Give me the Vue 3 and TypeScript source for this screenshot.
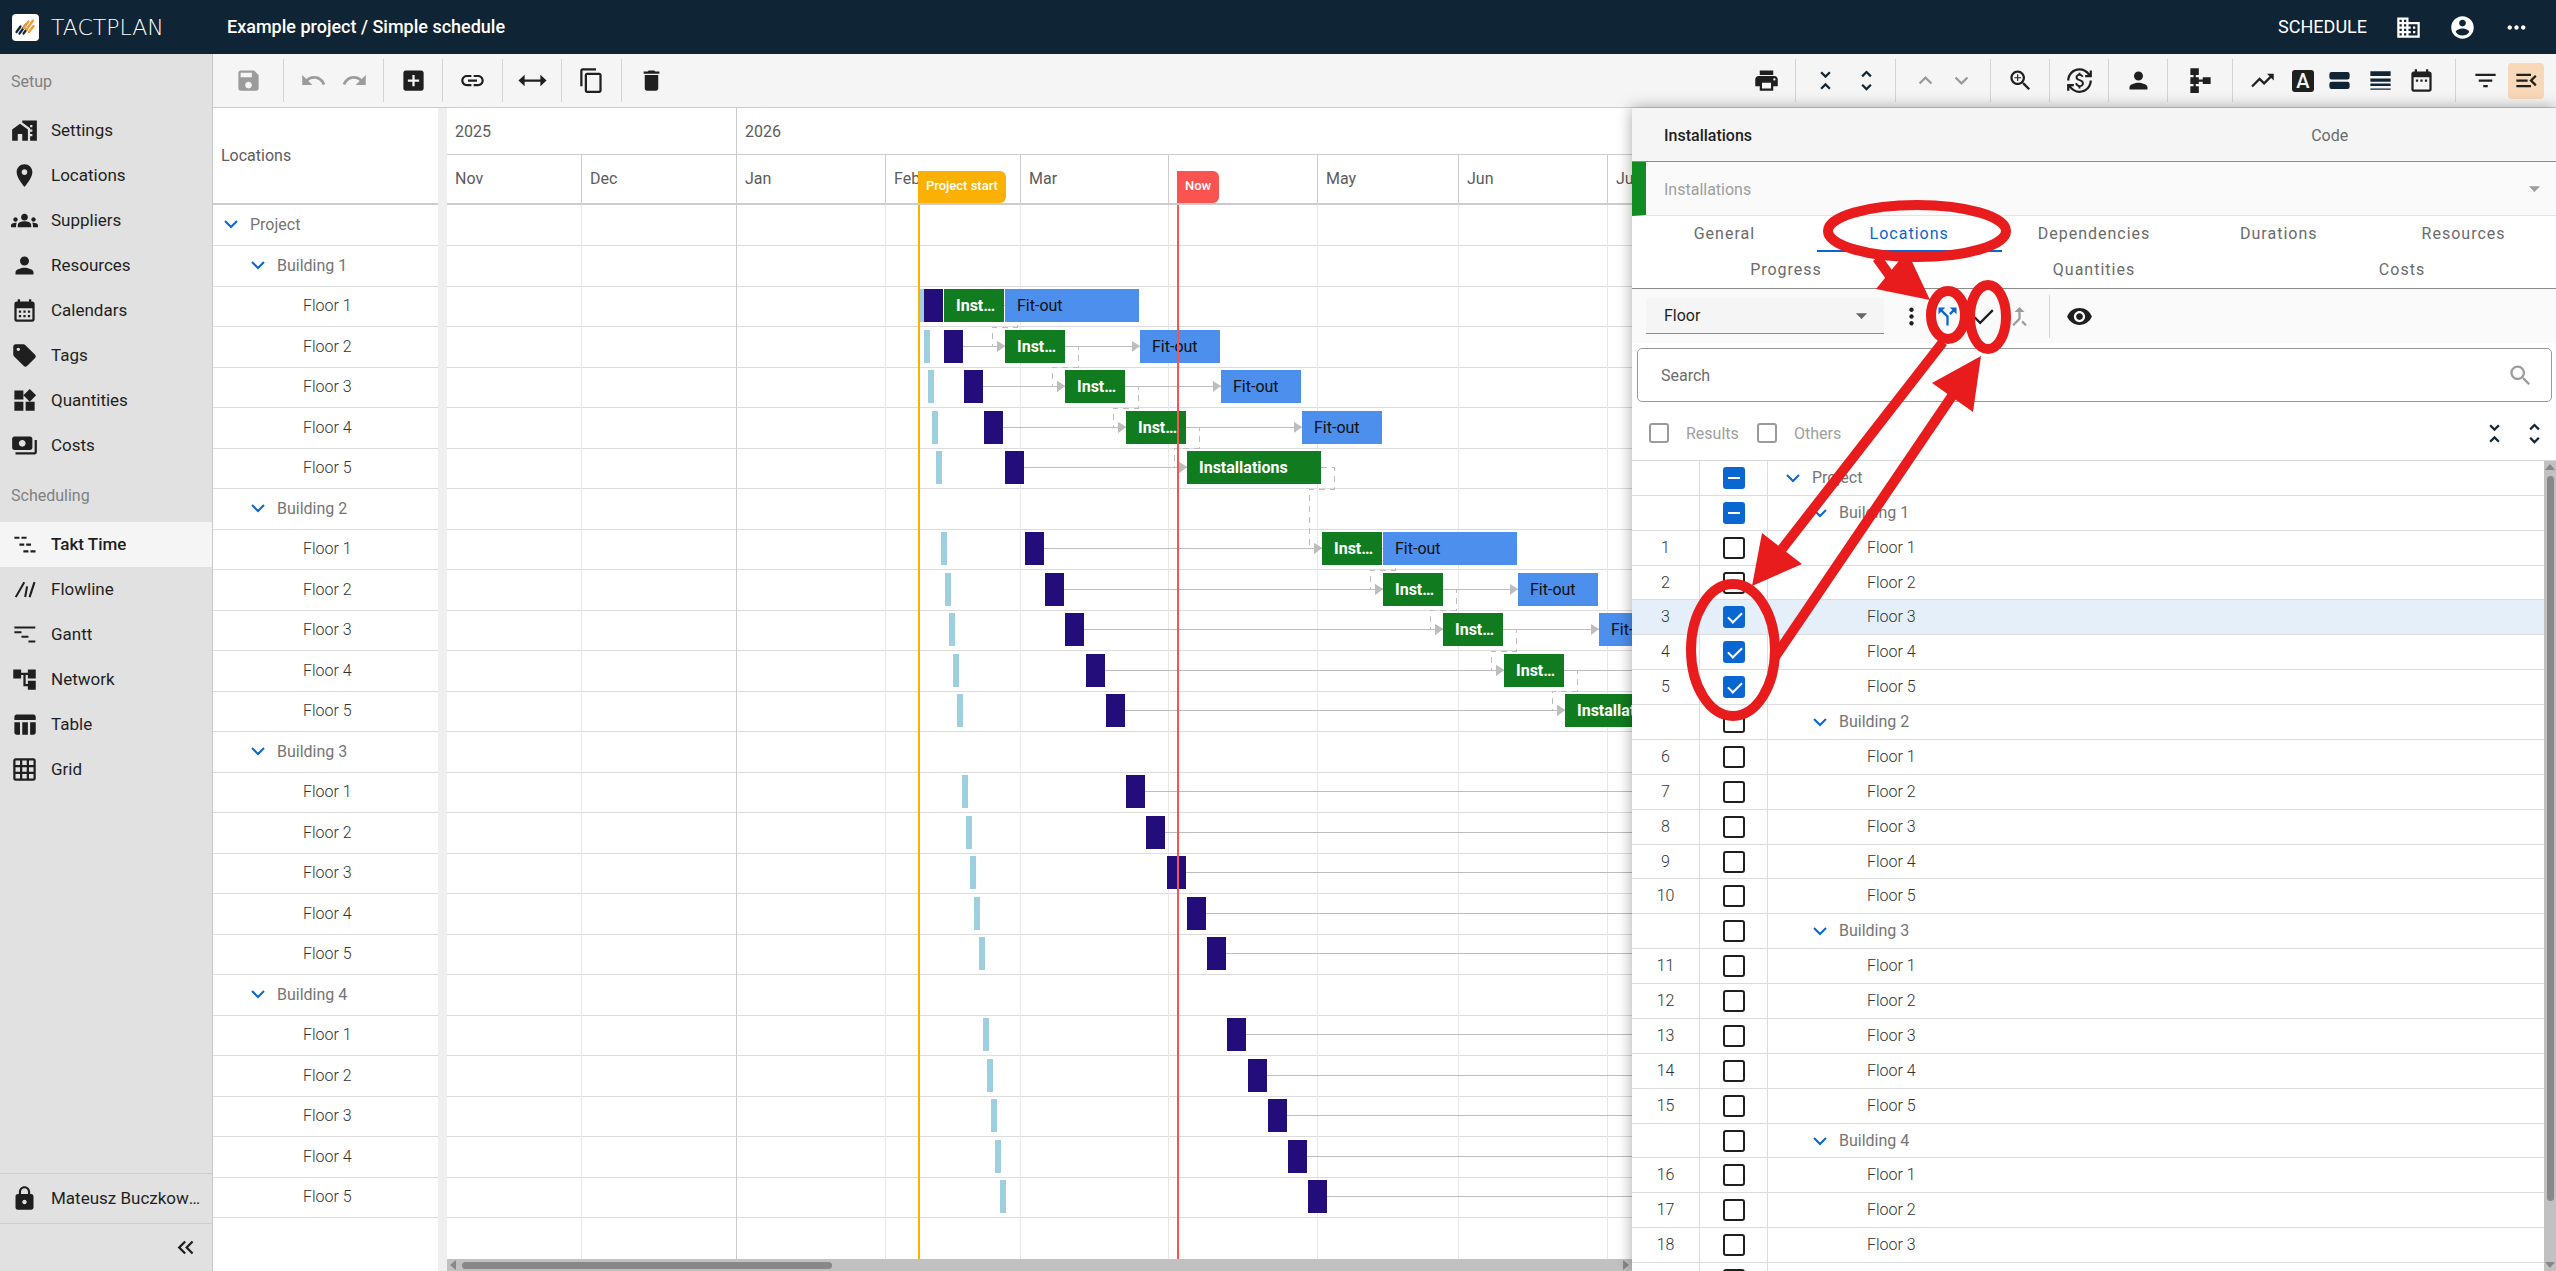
<script setup lang="ts">
import { h, ref, type FunctionalComponent } from 'vue'

const icons: Record<string, string> = {
  save: 'M17 3H5c-1.11 0-2 .9-2 2v14c0 1.1.89 2 2 2h14c1.1 0 2-.9 2-2V7l-4-4zm-5 16c-1.66 0-3-1.34-3-3s1.34-3 3-3 3 1.34 3 3-1.34 3-3 3zm3-10H5V5h10v4z',
  undo: 'M12.5 8c-2.65 0-5.05.99-6.9 2.6L2 7v9h9l-3.62-3.62c1.39-1.16 3.16-1.88 5.12-1.88 3.54 0 6.55 2.31 7.6 5.5l2.37-.78C21.08 11.03 17.15 8 12.5 8z',
  redo: 'M18.4 10.6C16.55 8.99 14.15 8 11.5 8c-4.65 0-8.58 3.03-9.96 7.22L3.9 16c1.05-3.19 4.05-5.5 7.6-5.5 1.95 0 3.73.72 5.12 1.88L13 16h9V7l-3.6 3.6z',
  add: 'M19 3H5c-1.11 0-2 .9-2 2v14c0 1.1.89 2 2 2h14c1.1 0 2-.9 2-2V5c0-1.1-.9-2-2-2zm-2 10h-4v4h-2v-4H7v-2h4V7h2v4h4v2z',
  link: 'M3.9 12c0-1.71 1.39-3.1 3.1-3.1h4V7H7c-2.76 0-5 2.24-5 5s2.24 5 5 5h4v-1.9H7c-1.71 0-3.1-1.39-3.1-3.1zM8 13h8v-2H8v2zm9-6h-4v1.9h4c1.71 0 3.1 1.39 3.1 3.1s-1.39 3.1-3.1 3.1h-4V17h4c2.76 0 5-2.24 5-5s-2.24-5-5-5z',
  stretch: 'M-.5 12 5 6.8v4.2h14V6.800l5.500 5.200-5.500 5.200V13H5v4.200z',
  copy: 'M16 1H4c-1.1 0-2 .9-2 2v14h2V3h12V1zm3 4H8c-1.1 0-2 .9-2 2v14c0 1.1.9 2 2 2h11c1.1 0 2-.9 2-2V7c0-1.1-.9-2-2-2zm0 16H8V7h11v14z',
  trash: 'M6 19c0 1.1.9 2 2 2h8c1.1 0 2-.9 2-2V7H6v12zM19 4h-3.5l-1-1h-5l-1 1H5v2h14V4z',
  print: 'M19 8H5c-1.66 0-3 1.34-3 3v6h4v4h12v-4h4v-6c0-1.66-1.34-3-3-3zm-3 11H8v-5h8v5zm3-7c-.55 0-1-.45-1-1s.45-1 1-1 1 .45 1 1-.45 1-1 1zm-1-9H6v4h12V3z',
  collapse: 'M7.41 18.59L8.83 20 12 16.83 15.17 20l1.41-1.41L12 14l-4.59 4.59zm9.18-13.18L15.17 4 12 7.17 8.83 4 7.41 5.41 12 10l4.59-4.59z',
  expand: 'M12 5.83L15.17 9l1.41-1.41L12 3 7.41 7.59 8.83 9 12 5.83zm0 12.34L8.83 15l-1.41 1.41L12 21l4.59-4.59L15.17 15 12 18.17z',
  up: 'M12 8l-6 6 1.41 1.41L12 10.83l4.59 4.58L18 14z',
  down: 'M16.59 8.59L12 13.17 7.41 8.59 6 10l6 6 6-6z',
  zoom: 'M15.5 14h-.79l-.28-.27C15.41 12.59 16 11.11 16 9.5 16 5.91 13.09 3 9.5 3S3 5.91 3 9.5 5.91 16 9.5 16c1.61 0 3.09-.59 4.23-1.57l.27.28v.79l5 4.99L20.49 19l-4.99-5zm-6 0C7.01 14 5 11.99 5 9.5S7.01 5 9.5 5 14 7.01 14 9.5 11.99 14 9.5 14zM12.500 10h-2.500v2.500H9V10H6.500V9H9V6.500h1V9h2.500v1z',
  search: 'M15.5 14h-.79l-.28-.27C15.41 12.59 16 11.11 16 9.5 16 5.91 13.09 3 9.5 3S3 5.91 3 9.5 5.91 16 9.5 16c1.61 0 3.09-.59 4.23-1.57l.27.28v.79l5 4.99L20.49 19l-4.99-5zm-6 0C7.01 14 5 11.99 5 9.5S7.01 5 9.5 5 14 7.01 14 9.5 11.99 14 9.5 14z',
  currency: 'M12.89 11.1c-1.78-.59-2.64-.96-2.64-1.9 0-1.02 1.11-1.39 1.81-1.39 1.31 0 1.79.99 1.9 1.34l1.58-.67c-.15-.44-.82-1.91-2.66-2.23V5h-1.75v1.26c-2.6.56-2.62 2.85-2.62 2.96 0 2.27 2.25 2.91 3.35 3.31 1.58.56 2.28 1.07 2.28 2.03 0 1.13-1.05 1.61-1.98 1.61-1.82 0-2.34-1.87-2.4-2.09l-1.66.67c.63 2.19 2.28 2.78 3.02 2.96V19h1.75v-1.24c.52-.09 3.02-.59 3.02-3.22.01-1.39-.6-2.61-3-3.44zM3 21H1v-6h6v2H4.52c1.61 2.41 4.36 4 7.48 4 4.97 0 9-4.03 9-9h2c0 6.08-4.92 11-11 11-3.72 0-7.01-1.85-9-4.67V21zm-2-9C1 5.92 5.92 1 12 1c3.72 0 7.01 1.85 9 4.67V3h2v6h-6V7h2.48C17.87 4.59 15.12 3 12 3c-4.97 0-9 4.03-9 9H1z',
  person: 'M12 12c2.21 0 4-1.79 4-4s-1.79-4-4-4-4 1.79-4 4 1.79 4 4 4zm0 2c-2.67 0-8 1.34-8 4v2h16v-2c0-2.66-5.33-4-8-4z',
  hub: 'M3 1h7.500v6H7.800v2h2.700v2h3.500V9h7v6h-7v-2h-3.500v2H7.800v2h2.700v6H3v-6h2.800v-2H3V9h2.800V7H3z',
  trend: 'M16 6l2.29 2.29-4.88 4.88-4-4L2 16.59 3.41 18l6-6 4 4 6.3-6.29L22 12V6z',
  rows2: 'M5 4.500h14a2 2 0 0 1 2 2v2.500a2 2 0 0 1-2 2H5a2 2 0 0 1-2-2V6.500a2 2 0 0 1 2-2zM5 13h14a2 2 0 0 1 2 2v2.500a2 2 0 0 1-2 2H5a2 2 0 0 1-2-2V15a2 2 0 0 1 2-2z',
  rows4: 'M3 3.700h18v4.400H3zM3 10.200h18v2.800H3zM3 14.700h18v2.200H3zM3 19h18v1.300H3z',
  dates: 'M9 11H7v2h2v-2zm4 0h-2v2h2v-2zm4 0h-2v2h2v-2zm2-7h-1V2h-2v2H8V2H6v2H5c-1.11 0-1.99.9-1.99 2L3 20c0 1.1.89 2 2 2h14c1.1 0 2-.9 2-2V6c0-1.1-.9-2-2-2zm0 16H5V9h14v11z',
  filter: 'M10 18h4v-2h-4v2zM3 6v2h18V6H3zm3 7h12v-2H6v2z',
  menuOpen: 'M3 18h13v-2H3v2zm0-5h10v-2H3v2zm0-7v2h13V6H3zm18 9.59L17.42 12 21 8.41 19.59 7l-5 5 5 5L21 15.59z',
  business: 'M12 7V3H2v18h20V7H12zM6 19H4v-2h2v2zm0-4H4v-2h2v2zm0-4H4V9h2v2zm0-4H4V5h2v2zm4 12H8v-2h2v2zm0-4H8v-2h2v2zm0-4H8V9h2v2zm0-4H8V5h2v2zm10 12h-8v-2h2v-2h-2v-2h2v-2h-2V9h8v10zm-2-8h-2v2h2v-2zm0 4h-2v2h2v-2z',
  account: 'M12 2C6.48 2 2 6.48 2 12s4.480 10 10 10 10-4.480 10-10S17.520 2 12 2zm0 3c1.660 0 3 1.340 3 3s-1.340 3-3 3-3-1.340-3-3 1.340-3 3-3zm0 14.200c-2.500 0-4.710-1.280-6-3.220.03-1.990 4-3.080 6-3.080 1.990 0 5.970 1.090 6 3.080-1.290 1.940-3.500 3.220-6 3.220z',
  more: 'M6 10c-1.1 0-2 .9-2 2s.9 2 2 2 2-.9 2-2-.9-2-2-2zm12 0c-1.1 0-2 .9-2 2s.9 2 2 2 2-.9 2-2-.9-2-2-2zm-6 0c-1.1 0-2 .9-2 2s.9 2 2 2 2-.9 2-2-.9-2-2-2z',
  moreVert: 'M12 8c1.1 0 2-.9 2-2s-.9-2-2-2-2 .9-2 2 .9 2 2 2zm0 2c-1.1 0-2 .9-2 2s.9 2 2 2 2-.9 2-2-.9-2-2-2zm0 6c-1.1 0-2 .9-2 2s.9 2 2 2 2-.9 2-2-.9-2-2-2z',
  split: 'M14 4l2.29 2.29-2.88 2.88 1.42 1.42 2.88-2.88L20 10V4zm-4 0H4v6l2.29-2.29 4.71 4.7V20h2v-8.41l-5.29-5.3z',
  check: 'M9 16.17L4.83 12l-1.42 1.41L9 19 21 7l-1.41-1.41z',
  merge: 'M17 20.41L18.41 19 15 15.59 13.59 17 17 20.41zM7.5 8H11v5.59L5.59 19 7 20.41l6-6V8h3.5L12 3.5 7.5 8z',
  eye: 'M12 4.5C7 4.5 2.73 7.61 1 12c1.73 4.39 6 7.5 11 7.5s9.27-3.11 11-7.5c-1.73-4.39-6-7.5-11-7.5zM12 17c-2.76 0-5-2.24-5-5s2.24-5 5-5 5 2.24 5 5-2.24 5-5 5zm0-8c-1.66 0-3 1.34-3 3s1.34 3 3 3 3-1.34 3-3-1.34-3-3-3z',
  drop: 'M7 10l5 5 5-5z',
  settings: 'M1 11v10h5v-6h4v6h5V11L8 6zM10 3v1.97l7 5V11h2v2h-2v2h2v2h-2v4h6V3H10zm9 6h-2V7h2v2z',
  place: 'M12 2C8.13 2 5 5.13 5 9c0 5.25 7 13 7 13s7-7.75 7-13c0-3.87-3.13-7-7-7zm0 9.5c-1.38 0-2.5-1.12-2.5-2.5s1.12-2.5 2.5-2.5 2.5 1.12 2.5 2.5-1.12 2.5-2.5 2.5z',
  groups: 'M12 12.75c1.63 0 3.07.39 4.24.9 1.08.48 1.76 1.56 1.76 2.73V18H6v-1.61c0-1.18.68-2.26 1.76-2.73 1.17-.52 2.61-.91 4.24-.91zM4 13c1.1 0 2-.9 2-2s-.9-2-2-2-2 .9-2 2 .9 2 2 2zm1.13 1.1c-.37-.06-.74-.1-1.13-.1-.99 0-1.93.21-2.78.58C.48 14.9 0 15.62 0 16.43V18h4.5v-1.61c0-.83.23-1.61.63-2.29zM20 13c1.1 0 2-.9 2-2s-.9-2-2-2-2 .9-2 2 .9 2 2 2zm4 3.43c0-.81-.48-1.53-1.22-1.85-.85-.37-1.79-.58-2.78-.58-.39 0-.76.04-1.13.1.4.68.63 1.46.63 2.29V18H24v-1.57zM12 6c1.66 0 3 1.34 3 3s-1.34 3-3 3-3-1.34-3-3 1.34-3 3-3z',
  calendar: 'M19 4h-1V2h-2v2H8V2H6v2H5c-1.11 0-1.99.9-1.99 2L3 20a2 2 0 0 0 2 2h14c1.1 0 2-.9 2-2V6c0-1.1-.9-2-2-2zm0 16H5V10h14v10zM9 14H7v-2h2v2zm4 0h-2v-2h2v2zm4 0h-2v-2h2v2zm-8 4H7v-2h2v2zm4 0h-2v-2h2v2zm4 0h-2v-2h2v2z',
  tag: 'M21.41 11.41l-8.83-8.83C12.21 2.21 11.7 2 11.17 2H4c-1.1 0-2 .9-2 2v7.17c0 .53.21 1.04.59 1.41l8.83 8.83c.78.78 2.05.78 2.83 0l7.17-7.17c.78-.78.78-2.04-.01-2.83zM6.5 8C5.67 8 5 7.33 5 6.5S5.67 5 6.5 5 8 5.67 8 6.5 7.33 8 6.5 8z',
  widgets: 'M13 13v8h8v-8h-8zM3 21h8v-8H3v8zM3 3v8h8V3H3zm13.66-1.31L11 7.34 16.66 13l5.66-5.66-5.66-5.65z',
  costs: 'M19 14V6c0-1.1-.9-2-2-2H3c-1.1 0-2 .9-2 2v8c0 1.1.9 2 2 2h14c1.1 0 2-.9 2-2zm-9-1c-1.66 0-3-1.34-3-3s1.34-3 3-3 3 1.34 3 3-1.34 3-3 3zm13-6v11c0 1.1-.9 2-2 2H4v-2h17V7h2z',
  takt: 'M3 5h4.500v1.800H3zM9.300 5h4.500v1.800H9.300zM7.500 11.200h4.300V13H7.500zM13.500 11.200h4.300V13h-4.300zM11 17.200h4.500V19H11zM17.300 17.200h4.500V19h-4.500z',
  flowline: 'M11 5.200l1.600.8L5 19.200l-1.600-.8zM13.400 9l1.800.3-1.700 9.500-1.800-.3zM20 5.200l1.800.5-4.400 13.300-1.800-.5z',
  gantt: 'M3 4.900h18.600v1.800H3zM3 9h6.300v1.800H3zM9.300 13.100h6.200v1.800H9.300zM15.500 17.300h6.100v1.800h-6.100z',
  network: 'M22 11V3h-7v3H9V3H2v8h7V8h2v10h4v3h7v-8h-7v3h-2V8h2v3z',
  table: 'M10 10.02h5V21h-5V10.02zM17 21h3c1.1 0 2-.9 2-2v-9h-5v11zm3-18H5c-1.1 0-2 .9-2 2v3h19V5c0-1.1-.9-2-2-2zM3 19c0 1.1.9 2 2 2h3V10H3v9z',
  grid: 'M20 2H4c-1.1 0-2 .9-2 2v16c0 1.1.9 2 2 2h16c1.1 0 2-.9 2-2V4c0-1.1-.9-2-2-2zM8 20H4v-4h4v4zm0-6H4v-4h4v4zm0-6H4V4h4v4zm6 12h-4v-4h4v4zm0-6h-4v-4h4v4zm0-6h-4V4h4v4zm6 12h-4v-4h4v4zm0-6h-4v-4h4v4zm0-6h-4V4h4v4z',
  lock: 'M18 8h-1V6c0-2.76-2.24-5-5-5S7 3.24 7 6v2H6c-1.1 0-2 .9-2 2v10c0 1.1.9 2 2 2h12c1.1 0 2-.9 2-2V10c0-1.1-.9-2-2-2zm-6 9c-1.1 0-2-.9-2-2s.9-2 2-2 2 .9 2 2-.9 2-2 2zm3.1-9H8.9V6c0-1.71 1.39-3.1 3.1-3.1 1.71 0 3.1 1.39 3.1 3.1v2z',
  left2: 'M17.59 18L19 16.59 14.42 12 19 7.41 17.59 6l-6 6zM11 18l1.41-1.41L7.83 12l4.58-4.59L11 6l-6 6z',
}

const Icon: FunctionalComponent<{ name: string }> = (props) =>
  h('svg', { class: 'icon', viewBox: '0 0 24 24', 'aria-hidden': 'true' }, [h('path', { d: icons[props.name] })])
Icon.props = ['name']

interface NavItem { icon: string; label: string }
const setup: NavItem[] = [
  { icon: 'settings', label: 'Settings' },
  { icon: 'place', label: 'Locations' },
  { icon: 'groups', label: 'Suppliers' },
  { icon: 'person', label: 'Resources' },
  { icon: 'calendar', label: 'Calendars' },
  { icon: 'tag', label: 'Tags' },
  { icon: 'widgets', label: 'Quantities' },
  { icon: 'costs', label: 'Costs' },
]
const scheduling: NavItem[] = [
  { icon: 'takt', label: 'Takt Time' },
  { icon: 'flowline', label: 'Flowline' },
  { icon: 'gantt', label: 'Gantt' },
  { icon: 'network', label: 'Network' },
  { icon: 'table', label: 'Table' },
  { icon: 'grid', label: 'Grid' },
]

interface ToolGroup { tools: string[]; kind?: string }
const editTools: ToolGroup[] = [
  { tools: ['save'], kind: 'wide off' },
  { tools: ['undo', 'redo'], kind: 'off' },
  { tools: ['add'] },
  { tools: ['link'], kind: 'loose' },
  { tools: ['stretch'] },
  { tools: ['copy'], kind: 'loose' },
  { tools: ['trash'] },
]
const viewTools: ToolGroup[] = [
  { tools: ['print'] },
  { tools: ['collapse', 'expand'], kind: 'navy' },
  { tools: ['up', 'down'], kind: 'off snug' },
  { tools: ['zoom'] },
  { tools: ['currency'] },
  { tools: ['person'] },
  { tools: ['hub'], kind: 'roomy' },
  { tools: ['trend', 'letter', 'rows2', 'rows4', 'dates'], kind: 'display' },
  { tools: ['filter', 'menuOpen'], kind: 'loose' },
]

interface Place { label: string; level: number; no?: number }
const places: Place[] = [{ label: 'Project', level: 0 }]
let counter = 0
for (let b = 1; b <= 4; b++) {
  places.push({ label: `Building ${b}`, level: 1 })
  for (let f = 1; f <= 5; f++) places.push({ label: `Floor ${f}`, level: 2, no: ++counter })
}

const months = [
  { label: 'Nov', width: 135 },
  { label: 'Dec', width: 155 },
  { label: 'Jan', width: 149 },
  { label: 'Feb', width: 135 },
  { label: 'Mar', width: 148 },
  { label: 'Apr', width: 149 },
  { label: 'May', width: 141 },
  { label: 'Jun', width: 149 },
  { label: 'Jul', width: 149 },
]
const monthLines = months.reduce<number[]>((all, m) => [...all, (all[all.length - 1] ?? 0) + m.width], []).slice(0, 8)

// Left edge and width of each task, in chart pixels, by tree row.
interface Train { row: number; prep: number; navy: number; inst?: [number, number]; fit?: [number, number] }
const trains: Train[] = [
  { row: 2, prep: 473, navy: 477, inst: [497, 60], fit: [558, 134] },
  { row: 3, prep: 477, navy: 497, inst: [558, 60], fit: [693, 80] },
  { row: 4, prep: 481, navy: 517, inst: [618, 60], fit: [774, 80] },
  { row: 5, prep: 485, navy: 537, inst: [679, 60], fit: [855, 80] },
  { row: 6, prep: 489, navy: 558, inst: [740, 134] },
  { row: 8, prep: 494, navy: 578, inst: [875, 60], fit: [936, 134] },
  { row: 9, prep: 498, navy: 598, inst: [936, 60], fit: [1071, 80] },
  { row: 10, prep: 502, navy: 618, inst: [996, 60], fit: [1152, 80] },
  { row: 11, prep: 506, navy: 639, inst: [1057, 60], fit: [1233, 80] },
  { row: 12, prep: 510, navy: 659, inst: [1118, 134] },
  { row: 14, prep: 515, navy: 679 },
  { row: 15, prep: 519, navy: 699 },
  { row: 16, prep: 523, navy: 720 },
  { row: 17, prep: 527, navy: 740 },
  { row: 18, prep: 532, navy: 760 },
  { row: 20, prep: 536, navy: 780 },
  { row: 21, prep: 540, navy: 801 },
  { row: 22, prep: 544, navy: 821 },
  { row: 23, prep: 548, navy: 841 },
  { row: 24, prep: 553, navy: 861 },
]
const rowTop = (row: number) => Math.ceil((row * 81) / 2)
const barTop = (row: number) => rowTop(row) + 3
const mid = (row: number) => barTop(row) + 16

interface Bar { x: number; y: number; w: number; kind: string; text?: string }
const bars: Bar[] = trains.flatMap((t) => {
  const y = barTop(t.row)
  const list: Bar[] = [
    { x: t.prep, y, w: 6, kind: 'prep' },
    { x: t.navy, y, w: 19, kind: 'navy-bar' },
  ]
  if (t.inst) list.push({ x: t.inst[0], y, w: t.inst[1], kind: 'inst', text: 'Installations' })
  if (t.fit) list.push({ x: t.fit[0], y, w: t.fit[1], kind: 'fit', text: 'Fit-out' })
  return list
})

interface Link { x1: number; x2: number; y: number }
const links: Link[] = trains.flatMap((t) => {
  const y = mid(t.row)
  const list: Link[] = [{ x1: t.navy + 19, x2: t.inst ? t.inst[0] : 1400, y }]
  if (t.inst && t.fit) list.push({ x1: t.inst[0] + t.inst[1], x2: t.fit[0], y })
  return list.filter((l) => l.x2 - l.x1 > 8)
})
const withInst = trains.filter((t) => t.inst)
const handovers = withInst.slice(1).map((t, i) => {
  const prev = withInst[i]
  const right = prev.inst![0] + prev.inst![1]
  const left = t.inst![0]
  return `M${right} ${mid(prev.row)}H${right + 13}V${rowTop(prev.row + 1)}H${left - 13}V${mid(t.row)}H${left}`
})
const handoverHeads = withInst.slice(1).map((t) => ({ x: t.inst![0], y: mid(t.row) }))

const tabs = ['General', 'Locations', 'Dependencies', 'Durations', 'Resources']
const moreTabs = ['Progress', 'Quantities', 'Costs']
const activeTab = ref('Locations')
const picked = ref<Set<number>>(new Set([3, 4, 5]))
const toggle = (no?: number) => {
  if (!no) return
  picked.value.has(no) ? picked.value.delete(no) : picked.value.add(no)
}
const name = ref('Installations')
const code = ref('')
const query = ref('')
</script>

<template>
  <div class="app">
    <header class="top">
      <a class="brand" href="#">
        <svg class="logo" viewBox="0 0 27 27" aria-hidden="true">
          <rect width="27" height="27" rx="4" fill="#fff" />
          <g fill="none" stroke-width="2.200" stroke-linecap="round">
            <path stroke="#0f2434" d="M4.500 18l4-5.500M7.500 19.500l6.500-9M11.500 19.500l3-4" />
            <path stroke="#f29a2e" d="M11.500 14l5-6.500M14.500 15.500l6.500-9M17 18l4.500-6" />
          </g>
        </svg>
        <span class="wordmark">TACTPLAN</span>
      </a>
      <h1>Example project / Simple schedule</h1>
      <nav class="top-right">
        <button class="mode" type="button">SCHEDULE</button>
        <button type="button" aria-label="Company"><Icon name="business" /></button>
        <button type="button" aria-label="Account"><Icon name="account" /></button>
        <button type="button" aria-label="More"><Icon name="more" /></button>
      </nav>
    </header>

    <aside class="side">
      <h2>Setup</h2>
      <a v-for="item in setup" :key="item.label" href="#" class="nav"><Icon :name="item.icon" /><span>{{ item.label }}</span></a>
      <h2>Scheduling</h2>
      <a v-for="item in scheduling" :key="item.label" href="#" class="nav" :class="{ active: item.label === 'Takt Time' }"><Icon :name="item.icon" /><span>{{ item.label }}</span></a>
      <a href="#" class="nav user"><Icon name="lock" /><span>Mateusz Buczkowski</span></a>
      <button class="fold" type="button" aria-label="Collapse menu"><Icon name="left2" /></button>
    </aside>

    <div class="tools">
      <div class="tool-set">
        <div v-for="(g, i) in editTools" :key="i" class="group" :class="g.kind">
          <button v-for="t in g.tools" :key="t" type="button" :aria-label="t"><Icon :name="t" /></button>
        </div>
      </div>
      <div class="tool-set">
        <div v-for="(g, i) in viewTools" :key="i" class="group" :class="g.kind">
          <button v-for="t in g.tools" :key="t" type="button" :aria-label="t" :class="t">
            <span v-if="t === 'letter'" class="letter-box">A</span>
            <Icon v-else :name="t" />
          </button>
        </div>
      </div>
    </div>

    <main class="work">
      <section class="tree">
        <div class="tree-head">Locations</div>
        <div v-for="(p, i) in places" :key="i" class="tree-row" :class="'level' + p.level">
          <button v-if="p.level < 2" class="chev" type="button" aria-label="Toggle"><svg viewBox="0 0 14 9"><path d="M1 1l6 6 6-6" /></svg></button>
          <span>{{ p.label }}</span>
        </div>
      </section>
      <div class="splitter"></div>

      <section class="chart">
        <div class="years"><div class="y25">2025</div><div>2026</div></div>
        <div class="months">
          <div v-for="m in months" :key="m.label" class="month" :style="{ width: m.width + 'px' }">{{ m.label }}</div>
          <span class="flag start">Project start</span>
          <span class="flag now">Now</span>
        </div>
        <div class="canvas">
          <div v-for="(p, i) in places" :key="i" class="chart-row"></div>
          <svg class="wires" aria-hidden="true">
            <path v-for="x in monthLines" :key="x" class="month-line" :class="{ year: x === 290 }" :d="`M${x - 1} 0h1v2000h-1z`" />
            <g v-for="(l, i) in links" :key="'l' + i">
              <path class="link-line" :d="`M${l.x1} ${l.y}H${l.x2}v1H${l.x1}z`" />
              <path class="head" :d="`M${l.x2 - 8} ${l.y - 5}l8 5-8 6z`" />
            </g>
            <path v-for="(d, i) in handovers" :key="'h' + i" class="dash" :d="d" />
            <path v-for="(p, i) in handoverHeads" :key="'a' + i" class="head" :d="`M${p.x - 8} ${p.y - 5}l8 5-8 6z`" />
          </svg>
          <div v-for="(b, i) in bars" :key="'b' + i" class="bar" :class="b.kind" :style="{ left: b.x + 'px', top: b.y + 'px', width: b.w + 'px' }">{{ b.text }}</div>
          <div class="marker start-line"></div>
          <div class="marker now-line"></div>
        </div>
        <div class="hbar">
          <svg viewBox="0 0 12 12"><path d="M9 1v10L3 6z" /></svg>
          <div class="htrack"><div class="hthumb"></div></div>
          <svg viewBox="0 0 12 12"><path d="M3 1v10l6-5z" /></svg>
        </div>
      </section>

      <section class="panel">
        <div class="names">
          <input v-model="name" class="title" aria-label="Name" />
          <input v-model="code" class="code" placeholder="Code" aria-label="Code" />
        </div>
        <div class="type">
          <select aria-label="Type" disabled><option>Installations</option></select>
          <Icon name="drop" />
        </div>
        <div class="tabs" role="tablist">
          <div class="tab-row">
            <button v-for="t in tabs" :key="t" type="button" role="tab" :aria-selected="t === activeTab" :class="{ on: t === activeTab }" @click="activeTab = t">{{ t }}</button>
          </div>
          <div class="tab-row">
            <button v-for="t in moreTabs" :key="t" type="button" role="tab" :aria-selected="t === activeTab" :class="{ on: t === activeTab }" @click="activeTab = t">{{ t }}</button>
          </div>
        </div>
        <div class="actions">
          <div class="pick">
            <select aria-label="Level"><option>Floor</option></select>
            <Icon name="drop" />
          </div>
          <div class="act-group">
            <button type="button" aria-label="Options"><Icon name="moreVert" /></button>
            <button type="button" aria-label="Split" class="blue"><Icon name="split" /></button>
            <button type="button" aria-label="Apply"><Icon name="check" /></button>
            <button type="button" aria-label="Merge" class="grey"><Icon name="merge" /></button>
          </div>
          <button type="button" aria-label="Show" class="show"><Icon name="eye" /></button>
        </div>
        <div class="search">
          <input v-model="query" type="text" placeholder="Search" aria-label="Search" />
          <Icon name="search" />
        </div>
        <div class="filters">
          <label><input type="checkbox" class="box soft" /><span>Results</span></label>
          <label><input type="checkbox" class="box soft" /><span>Others</span></label>
          <button type="button" aria-label="Collapse all" class="first"><Icon name="collapse" /></button>
          <button type="button" aria-label="Expand all"><Icon name="expand" /></button>
        </div>
        <div class="list">
          <table>
            <colgroup><col class="c1" /><col class="c2" /><col /></colgroup>
            <tbody>
              <tr v-for="(p, i) in places" :key="i" :class="{ hot: p.no === 3 }">
                <td class="no">{{ p.no }}</td>
                <td class="tick"><input type="checkbox" class="box" :aria-label="p.label" :checked="!!p.no && picked.has(p.no)" :indeterminate.prop="i < 2" @change="toggle(p.no)" /></td>
                <td class="place" :class="'level' + p.level">
                  <button v-if="p.level < 2" class="chev" type="button" aria-label="Toggle"><svg viewBox="0 0 14 9"><path d="M1 1l6 6 6-6" /></svg></button>
                  <span>{{ p.label }}</span>
                </td>
              </tr>
            </tbody>
          </table>
          <div class="vbar">
            <svg viewBox="0 0 12 12"><path d="M1 9h10L6 3z" /></svg>
            <div class="vtrack"><div class="vthumb"></div></div>
            <svg viewBox="0 0 12 12"><path d="M1 3h10L6 9z" /></svg>
          </div>
        </div>

        <svg class="notes" aria-hidden="true">
          <g class="rings">
            <ellipse cx="285" cy="123" rx="89" ry="26" />
            <ellipse cx="316" cy="207" rx="17" ry="24" />
            <ellipse cx="356" cy="209" rx="18" ry="32" />
            <ellipse cx="101" cy="542" rx="42" ry="66" />
            <path d="M245 150l16 22M311 234L150 441M143 549L320 288" />
          </g>
          <path class="heads" d="M275 143l23 49-54-11zM130 425l40 31-50 22zM349 248l-8 56-41-29z" />
        </svg>
      </section>
    </main>
  </div>
</template>

<style>
html,
body {
  margin: 0;
  overflow: hidden;
}
</style>

<style scoped>
.app {
  display: grid;
  grid-template-columns: 213px minmax(0, 1fr);
  grid-template-rows: 54px 54px minmax(0, 1fr);
  height: 100vh;
  overflow: hidden;
  background: #fff;
  color: #1f1f1f;
  font-family: Roboto, sans-serif;
  font-size: 16px;
}
* {
  box-sizing: border-box;
}
button,
input,
select {
  margin: 0;
  padding: 0;
  border: 0;
  background: none;
  color: inherit;
  font: inherit;
  outline: none;
}
button {
  display: flex;
  align-items: center;
  justify-content: center;
}
select {
  appearance: none;
  opacity: 1;
}
a {
  color: inherit;
  text-decoration: none;
}
.icon {
  display: block;
  flex: none;
  width: 27px;
  height: 27px;
  fill: currentColor;
  overflow: visible;
}

.top {
  grid-column: 1 / 3;
  display: flex;
  align-items: center;
  padding: 0 21px 0 12px;
  background: #0f2434;
  color: #fff;
}
.brand {
  display: flex;
  align-items: center;
  width: 215px;
  gap: 12px;
}
.logo {
  width: 27px;
  height: 27px;
}
.wordmark {
  font: 200 22px 'DejaVu Sans', sans-serif;
}
h1 {
  margin: 0;
  padding-bottom: 2px;
  font-size: 18px;
  font-weight: 500;
}
.top-right {
  display: flex;
  align-items: center;
  margin-left: auto;
}
.top-right button {
  width: 54px;
  height: 54px;
}
.top-right button:last-child {
  width: 38px;
  margin-left: 8px;
}
.top-right .mode {
  width: auto;
  margin-right: 14px;
  padding-bottom: 2px;
  font-size: 18px;
}

.side {
  grid-row: 2 / 4;
  display: flex;
  flex-direction: column;
  border-right: 1px solid #c8c8c8;
  background: #e1e1e1;
}
.side h2 {
  height: 54px;
  margin: 0;
  padding-left: 11px;
  color: #808080;
  font-size: 16px;
  font-weight: 400;
  line-height: 56px;
}
.nav {
  display: flex;
  align-items: center;
  flex: none;
  height: 45px;
  padding: 0 9px 0 11px;
  gap: 13px;
  font-size: 17px;
}
.nav span {
  padding-bottom: 2px;
  overflow: hidden;
  text-overflow: ellipsis;
  white-space: nowrap;
}
.nav.active {
  background: #f5f5f5;
  font-weight: 500;
}
.nav.user {
  height: 51px;
  margin-top: auto;
  border-top: 1px solid #ccc;
  border-bottom: 1px solid #ccc;
}
.fold {
  align-self: flex-end;
  width: 54px;
  height: 47px;
}

.tools {
  display: flex;
  justify-content: space-between;
  border-bottom: 1px solid #ccc;
  background: #f5f5f5;
}
.tool-set {
  display: flex;
  align-items: center;
}
.group {
  display: flex;
  align-items: center;
  height: 43px;
  padding: 0 11px;
  gap: 5px;
  border-right: 1px solid #d4d4d4;
}
.group:last-child {
  border-right: 0;
}
.group.wide {
  padding: 0 17px;
}
.group.loose {
  padding: 0 12px 0 11px;
}
.group.roomy {
  padding: 0 14px;
}
.group.display {
  padding: 0 16px 0 11px;
}
.group.snug {
  gap: 0;
}
.group.off {
  color: #9b9b9b;
}
.group.navy,
.rows2,
.rows4 {
  color: #0f2434;
}
.group button {
  width: 36px;
  height: 36px;
  border-radius: 4px;
}
.group .rows2 {
  margin-left: -5px;
}
.group .menuOpen {
  background: #f7d8b8;
}
.letter-box {
  width: 22px;
  height: 22px;
  border-radius: 3px;
  background: #1f1f1f;
  color: #f5f5f5;
  font-size: 20px;
  font-weight: 500;
  line-height: 23px;
  text-align: center;
}

.work {
  display: grid;
  grid-template-columns: 225px 9px minmax(0, 1185fr) minmax(0, 924fr);
  grid-template-rows: minmax(0, 1fr);
  min-height: 0;
}
.tree,
.chart {
  min-width: 0;
  min-height: 0;
  overflow: hidden;
}
.tree-head {
  display: flex;
  align-items: center;
  height: 97px;
  padding-left: 8px;
  border-bottom: 2px solid #ccc;
  color: #5c5c5c;
}
.tree-row,
.chart-row {
  height: 41px;
  border-bottom: 1px solid #dcdcdc;
}
.tree-row {
  display: flex;
  align-items: center;
  padding-bottom: 2px;
  padding-left: 90px;
  color: #333;
  font-weight: 300;
}
.tree-row:nth-child(even):not(:nth-child(2)) {
  height: 40px;
}
.chart-row:nth-child(odd):not(:first-child) {
  height: 40px;
}
.level0,
.level1 {
  color: #757575;
  font-weight: 400;
}
.tree-row.level0 {
  padding-left: 11px;
}
.tree-row.level1 {
  padding-left: 38px;
}
.tree-row .chev {
  margin-right: 12px;
}
.chev {
  display: inline-flex;
  width: 14px;
}
.chev svg {
  width: 14px;
  height: 9px;
  fill: none;
  stroke: #0a66d0;
  stroke-width: 2;
}
.splitter {
  background: #efefef;
}

.chart {
  display: flex;
  flex-direction: column;
  color: #5c5c5c;
}
.years {
  display: flex;
  flex: none;
  height: 47px;
  border-bottom: 1px solid #ccc;
  line-height: 48px;
}
.years div {
  padding-left: 8px;
}
.years .y25 {
  width: 290px;
  border-right: 1px solid #ccc;
}
.months {
  position: relative;
  display: flex;
  flex: none;
  height: 50px;
  border-bottom: 2px solid #ccc;
  line-height: 48px;
}
.month {
  flex: none;
  padding-left: 8px;
  border-right: 1px solid #ccc;
}
.flag {
  position: absolute;
  top: 16px;
  height: 32px;
  padding: 0 8px;
  border-radius: 0 6px 6px 0;
  color: #fff;
  font-size: 13px;
  font-weight: 500;
  line-height: 30px;
}
.start {
  left: 471px;
  background: #fbb004;
}
.now {
  left: 730px;
  background: #fb5350;
}
.canvas {
  position: relative;
  flex: 1;
  min-height: 0;
  overflow: hidden;
}
.wires {
  position: absolute;
  inset: 0;
  width: 100%;
  height: 100%;
}
.month-line {
  fill: #e8e8e8;
}
.month-line.year {
  fill: #ccc;
}
.link-line,
.head {
  fill: #bdbdbd;
}
.dash {
  fill: none;
  stroke: #bdbdbd;
  stroke-dasharray: 6 5;
  shape-rendering: crispEdges;
}
.bar {
  position: absolute;
  height: 33px;
  overflow: hidden;
  line-height: 33px;
  text-overflow: ellipsis;
  white-space: nowrap;
}
.prep {
  background: #9ecfe0;
}
.navy-bar {
  background: #220d7a;
}
.inst {
  padding: 0 8px 0 12px;
  background: #107c1f;
  color: #fff;
  font-weight: 700;
}
.fit {
  padding: 0 8px 0 12px;
  background: #4c8fec;
  color: #111;
}
.marker {
  position: absolute;
  top: 0;
  bottom: 0;
  width: 2px;
}
.start-line {
  left: 471px;
  background: #fbb004;
}
.now-line {
  left: 730px;
  background: #fb5350;
}
.hbar {
  display: flex;
  flex: none;
  height: 12px;
  background: #c1c1c1;
}
.hbar svg,
.vbar svg {
  width: 12px;
  height: 12px;
  fill: #888;
}
.htrack {
  flex: 1;
  padding: 3px;
}
.hthumb {
  width: 32%;
  height: 7px;
  border-radius: 4px;
  background: #888;
}

.panel {
  position: relative;
  display: flex;
  flex-direction: column;
  min-width: 0;
  min-height: 0;
  background: #fff;
  box-shadow: 0 0 14px rgba(0, 0, 0, 0.35);
}
.names {
  display: flex;
  flex: none;
  height: 54px;
  border-bottom: 1px solid #8c8c8c;
  background: #f5f5f5;
}
.names input {
  min-width: 0;
  padding-top: 2px;
}
.names .title {
  flex: 37;
  padding-left: 32px;
  font-weight: 500;
}
.names .code {
  flex: 14;
}
.code::placeholder,
.search input::placeholder {
  color: #6b6b6b;
  opacity: 1;
}
.type {
  display: flex;
  align-items: center;
  flex: none;
  height: 54px;
  padding-right: 8px;
  border-bottom: 1px solid #e4e4e4;
  border-left: 14px solid #118c22;
  background: #fafafa;
  color: #9e9e9e;
}
.type select {
  flex: 1;
  padding-top: 2px;
  padding-left: 18px;
}
.tabs {
  flex: none;
  border-bottom: 1px solid #8c8c8c;
}
.tab-row {
  display: flex;
}
.tab-row button {
  flex: 1 1 0;
  height: 36px;
  border-bottom: 2px solid transparent;
  color: #6b6b6b;
  letter-spacing: 1px;
}
.tab-row .on {
  border-bottom-color: #0a66d0;
  color: #0a66d0;
}
.actions {
  display: flex;
  align-items: center;
  flex: none;
  height: 54px;
  padding-left: 14px;
  background: #fafafa;
}
.pick {
  display: flex;
  align-items: center;
  width: 238px;
  height: 36px;
  padding-right: 9px;
  border-bottom: 1px solid #8c8c8c;
  border-radius: 4px 4px 0 0;
  background: #f5f5f5;
  color: #666;
}
.pick select {
  flex: 1;
  padding-left: 18px;
  color: #1f1f1f;
}
.act-group {
  display: flex;
  align-items: center;
  height: 43px;
  margin-left: 9px;
  padding-right: 12px;
  border-right: 1px solid #d4d4d4;
}
.act-group button,
.show {
  width: 36px;
  height: 36px;
}
.show {
  margin-left: 11px;
}
.blue {
  color: #0a66d0;
}
.grey {
  color: #9b9b9b;
}
.search {
  display: flex;
  align-items: center;
  flex: none;
  height: 54px;
  margin: 5px 4px 0 5px;
  padding-right: 17px;
  border: 1px solid #999;
  border-radius: 5px;
  color: #9b9b9b;
}
.search input {
  flex: 1;
  height: 100%;
  padding-left: 23px;
}
.filters {
  display: flex;
  align-items: center;
  flex: none;
  height: 58px;
  padding: 4px 4px 0 17px;
  color: #9e9e9e;
}
.filters label {
  display: flex;
  align-items: center;
  width: 108px;
  gap: 17px;
}
.filters button {
  width: 36px;
  height: 36px;
  margin-left: 4px;
  color: #0f2434;
}
.filters .first {
  margin-left: auto;
}
.box {
  position: relative;
  display: block;
  flex: none;
  width: 22px;
  height: 22px;
  border: 2px solid #1f1f1f;
  border-radius: 3px;
  appearance: none;
}
.box.soft {
  width: 20px;
  height: 20px;
  border-color: #9b9b9b;
}
.box:checked,
.box:indeterminate {
  border-color: #0a66d0;
  background: #0a66d0;
}
.box:checked::after {
  position: absolute;
  top: 1px;
  left: 6px;
  width: 6px;
  height: 12px;
  border: solid #fff;
  border-width: 0 2px 2px 0;
  content: '';
  transform: rotate(45deg);
}
.box:indeterminate::after {
  position: absolute;
  top: 8px;
  left: 3px;
  width: 12px;
  height: 2px;
  background: #fff;
  content: '';
}
.list {
  display: flex;
  flex: 1;
  align-items: stretch;
  min-height: 0;
  overflow: hidden;
  border-top: 1px solid #d8d8d8;
}
table {
  flex: 1;
  align-self: flex-start;
  width: 100%;
  border-spacing: 0;
  table-layout: fixed;
}
.c1,
.c2 {
  width: 68px;
}
td {
  height: 35px;
  padding: 0;
  border-right: 1px solid #dcdcdc;
  border-bottom: 1px solid #dcdcdc;
  line-height: 20px;
}
tr:nth-child(8n + 4) td {
  height: 34px;
}
td:last-child {
  border-right: 0;
}
.hot {
  background: #e4effa;
}
.no {
  color: #333;
  font-weight: 300;
  text-align: center;
}
.tick .box {
  margin: 0 auto;
}
.place {
  padding-left: 99px;
  font-weight: 300;
  color: #333;
}
.place.level0,
.place.level1 {
  padding-left: 18px;
  color: #757575;
  font-weight: 400;
}
.place.level1 {
  padding-left: 45px;
}
.place .chev {
  margin-right: 12px;
}
.vbar {
  display: flex;
  flex: none;
  flex-direction: column;
  width: 12px;
  background: #c1c1c1;
}
.vtrack {
  flex: 1;
  padding: 3px;
}
.vthumb {
  width: 7px;
  height: 93%;
  border-radius: 4px;
  background: #888;
}

.notes {
  position: absolute;
  top: 0;
  left: 0;
  width: 100%;
  height: 100%;
  overflow: visible;
  pointer-events: none;
}
.rings {
  fill: none;
  stroke: #e81c1c;
  stroke-width: 10;
}
.heads {
  fill: #e81c1c;
}
</style>
